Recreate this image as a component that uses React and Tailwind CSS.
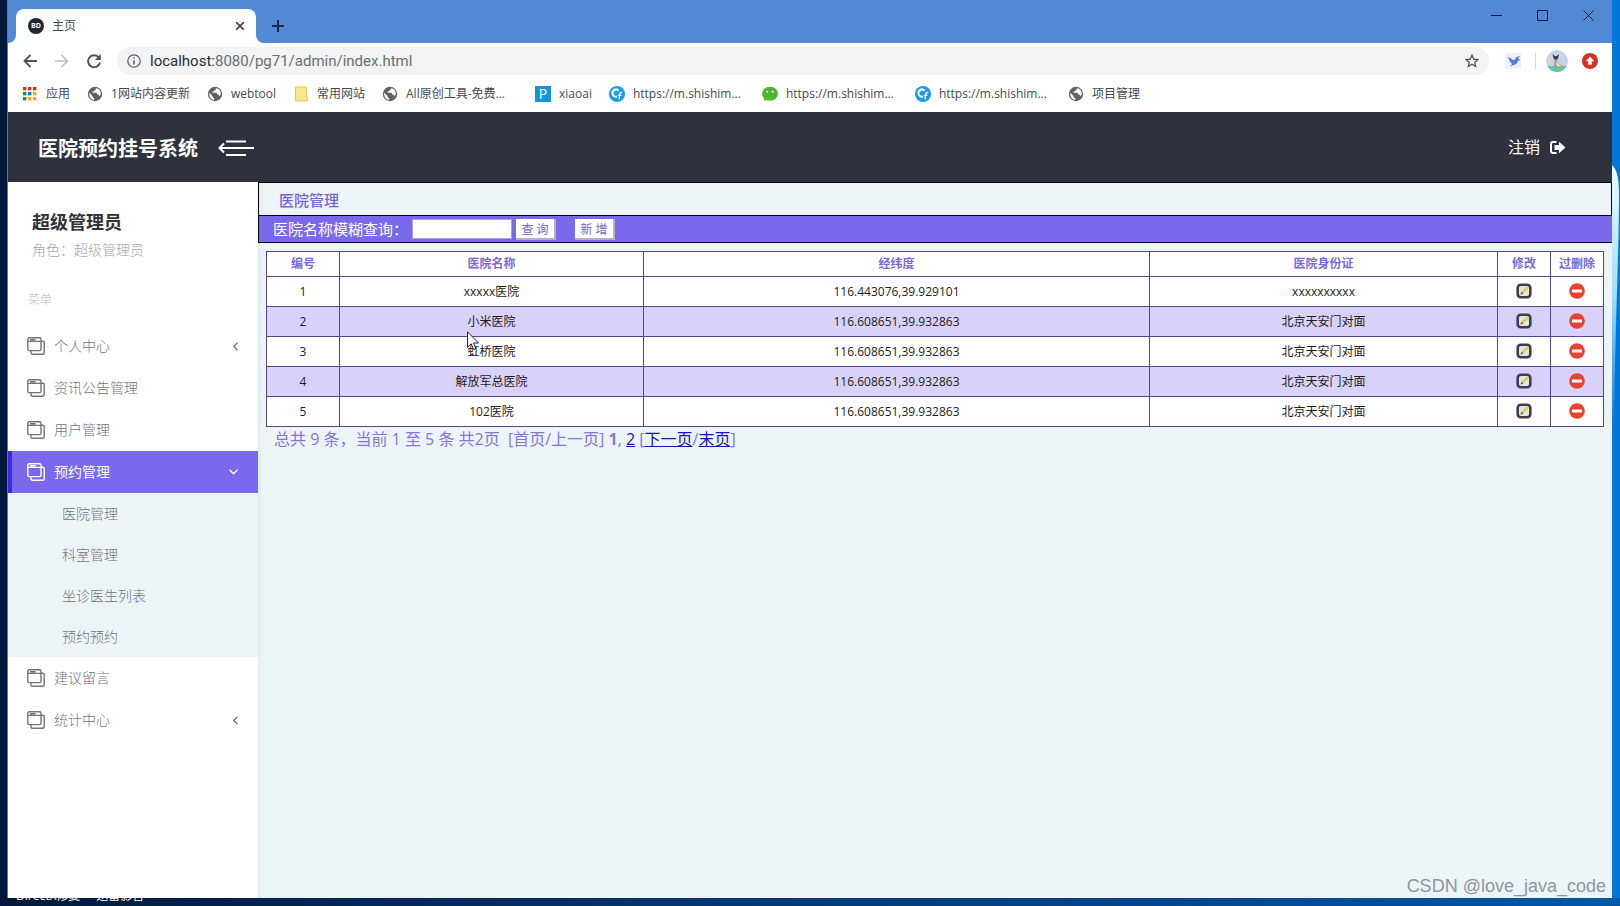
import { useState } from 'react';

const menus = [
    { title: '个人中心', arrow: true },
    { title: '资讯公告管理' },
    { title: '用户管理' },
    { title: '预约管理', arrow: true, children: ['医院管理', '科室管理', '坐诊医生列表', '预约预约'] },
    { title: '建议留言' },
    { title: '统计中心', arrow: true },
];

const hospitals = [
    { name: 'xxxxx医院', position: '116.443076,39.929101', address: 'xxxxxxxxxx' },
    { name: '小米医院', position: '116.608651,39.932863', address: '北京天安门对面' },
    { name: '虹桥医院', position: '116.608651,39.932863', address: '北京天安门对面' },
    { name: '解放军总医院', position: '116.608651,39.932863', address: '北京天安门对面' },
    { name: '102医院', position: '116.608651,39.932863', address: '北京天安门对面' },
];

const bookmarks = [
    { icon: 'apps', label: '应用' },
    { icon: 'globe', label: '1网站内容更新' },
    { icon: 'globe', label: 'webtool' },
    { icon: 'folder', label: '常用网站' },
    { icon: 'globe', label: 'All原创工具-免费...', wide: true },
    { icon: 'p', label: 'xiaoai' },
    { icon: 'c', label: 'https://m.shishim...', wide: true },
    { icon: 'wechat', label: 'https://m.shishim...', wide: true },
    { icon: 'c', label: 'https://m.shishim...', wide: true },
    { icon: 'globe', label: '项目管理' },
];

const BookmarkIcon = ({ type }) => {
    const appColors = ['#d93025', '#d93025', '#d93025', '#1e8e3e', '#1a73e8', '#f9ab00', '#1e8e3e', '#f9ab00', '#f9ab00'];

    if (type === 'apps') {
        return (
            <svg className="size-4 shrink-0" viewBox="0 0 16 16">
                {appColors.map((color, i) => (
                    <rect key={i} x={1 + (i % 3) * 5} y={1 + Math.floor(i / 3) * 5} width="3.4" height="3.4" fill={color} />
                ))}
            </svg>
        );
    }
    if (type === 'folder') {
        return (
            <svg className="size-4 shrink-0" viewBox="0 0 16 16">
                <path d="M2.5 1h11v10l.8 1v3H2.5z" fill="#fce68c" stroke="#e8c64f" strokeWidth="1" />
            </svg>
        );
    }
    if (type === 'p') {
        return <span className="flex size-4 shrink-0 items-center justify-center bg-[#1296db] text-sm text-white">P</span>;
    }
    if (type === 'c') {
        return (
            <svg className="size-4 shrink-0" viewBox="0 0 16 16">
                <circle cx="8" cy="8" r="8" fill="#1b9be6" />
                <path d="M9.6 4.6A3.6 3.6 0 1 0 8 10.6" fill="none" stroke="#fff" strokeWidth="2" />
                <path d="M13.2 6.6c-2-.4-2.6.6-2.7 2.2l-.3 4.4M8.8 9.4h3.6" fill="none" stroke="#fff" strokeWidth="1.3" />
            </svg>
        );
    }
    if (type === 'wechat') {
        return (
            <svg className="size-4 shrink-0" viewBox="0 0 16 16">
                <ellipse cx="8" cy="7.8" rx="8" ry="7" fill="#4cb82e" />
                <path d="M2.5 12 2 15l3.5-1.2z" fill="#4cb82e" />
                <circle cx="5.2" cy="5.8" r="1" fill="#fff" />
                <circle cx="10.6" cy="5.8" r="1" fill="#fff" />
            </svg>
        );
    }
    return (
        <svg className="size-4 shrink-0" viewBox="0 0 16 16">
            <circle cx="8" cy="8" r="7.2" fill="#5f6368" />
            <path d="M2.3 6.8 5.5 10v1l1.7 1.5v1.5C4.3 13.7 2.2 11 2.2 8zM8.8 2.2c.4 1-.2 1.8-1.3 2-.2 1.3-.9 1.2-1.9 1.3v1.3h3.6c1 .2.9 1.8 2 2 .9 0 1.3.7 1.2 1.8 1.5-1.8 1.8-4 .7-5.900-.8-1.400-2.300-2.400-4.300-2.500z" fill="#fff" />
        </svg>
    );
};

const WindowsIcon = () => (
    <svg className="size-[18px] shrink-0" viewBox="0 0 18 18" fill="none" stroke="currentColor" strokeWidth="1.4">
        <rect x=".8" y=".8" width="13.2" height="12.8" rx="1.6" />
        <path d="M.8 4.4H14M3 2.7h5.500M14 4.200h2a1.200 1.200 0 0 1 1.200 1.200V16a1.200 1.200 0 0 1-1.200 1.200H5.200A1.200 1.200 0 0 1 4 16v-2.400" />
    </svg>
);

const EditIcon = () => (
    <svg className="size-4" viewBox="0 0 16 16">
        <rect x="1.7" y="1.7" width="12.6" height="12.6" rx="3" fill="#dfe5e8" stroke="#3c3e4c" strokeWidth="2.6" />
        <path d="m4.500 11.500 1-2.800 5.600-5.500 2 1.900-5.700 5.500z" fill="#e6cd55" />
        <path d="m4.500 11.500 1-2.800 1.900 1.900z" fill="#6b5f49" />
    </svg>
);

const DeleteIcon = () => (
    <svg className="size-4" viewBox="0 0 16 16">
        <circle cx="8" cy="8" r="7.8" fill="#e8432e" />
        <rect x="3" y="6.6" width="10" height="2.8" rx=".5" fill="#fff" />
    </svg>
);

const TitleBar = () => (
    <div className="flex h-[43px] items-end bg-[#5389d4]">
        <svg className="size-2" viewBox="0 0 8 8"><path d="M8 0v8H0a8 8 0 0 0 8-8z" fill="#fff" /></svg>
        <div className="flex h-[34px] w-60 items-center rounded-t-lg bg-white px-3 text-xs text-[#45494d]">
            <span className="mr-2 flex size-4 items-center justify-center rounded-full bg-[#23262e] text-[7px] font-bold text-white">BD</span>
            <span className="flex-1">主页</span>
            <button aria-label="关闭标签页">
                <svg className="size-2" viewBox="0 0 8 8" stroke="#3c4043" strokeWidth="1.600"><path d="m0 0 8 8M8 0 0 8" /></svg>
            </button>
        </div>
        <svg className="size-2" viewBox="0 0 8 8"><path d="M0 0v8h8a8 8 0 0 1-8-8z" fill="#fff" /></svg>
        <button className="mb-[11px] ml-2" aria-label="新标签页">
            <svg className="size-3" viewBox="0 0 12 12" stroke="#1b2b45" strokeWidth="2"><path d="M6 0v12M0 6h12" /></svg>
        </button>
        <div className="ml-auto flex items-center gap-[35px] self-start pt-[10px] pr-[18px]">
            <button aria-label="最小化">
                <svg className="size-[11px]" viewBox="0 0 11 11" stroke="#101c33"><path d="M0 5.500h11" /></svg>
            </button>
            <button aria-label="最大化">
                <svg className="size-[11px]" viewBox="0 0 11 11" fill="none" stroke="#101c33"><path d="M.5.5h10v10H.5z" /></svg>
            </button>
            <button aria-label="关闭">
                <svg className="size-[11px]" viewBox="0 0 11 11" stroke="#101c33"><path d="m.5.5 10 10m0-10-10 10" /></svg>
            </button>
        </div>
    </div>
);

const AddressBar = () => (
    <div className="flex h-9 items-center pl-[15px]">
        <div className="flex items-center gap-[18px] text-[#505357]">
            <button aria-label="后退">
                <svg className="size-[14px]" viewBox="0 0 14 14" fill="none" stroke="currentColor" strokeWidth="1.800"><path d="M14 7H1.500M7.500 1l-6 6 6 6" /></svg>
            </button>
            <button className="text-[#bcbec1]" aria-label="前进">
                <svg className="size-[14px]" viewBox="0 0 14 14" fill="none" stroke="currentColor" strokeWidth="1.600"><path d="M0 7h12.500M6.500 1l6 6-6 6" /></svg>
            </button>
            <button aria-label="刷新">
                <svg className="size-[14px]" viewBox="0 0 14 14" fill="none" stroke="currentColor" strokeWidth="1.900">
                    <path d="M12 3.800A6 6 0 1 0 13 8.500" />
                    <path d="M13.800 0v6H7.800z" fill="currentColor" stroke="none" />
                </svg>
            </button>
        </div>
        <div className="ml-4 flex h-7 flex-1 items-center rounded-full bg-[#f1f3f4] pr-[10px] pl-[10px]">
            <svg className="mr-[9px] size-[14px]" viewBox="0 0 14 14" fill="none" stroke="#5f6368" strokeWidth="1.300">
                <circle cx="7" cy="7" r="6.200" />
                <path d="M7 6.200v4.300M7 3.400v1.400" strokeWidth="1.600" />
            </svg>
            <span className="flex-1 font-['Roboto',sans-serif] text-[15px] text-[#6b6f73]"><span className="text-[#2b2e31]">localhost:</span>8080/pg71/admin/index.html</span>
            <button aria-label="收藏">
                <svg className="size-[14px]" viewBox="0 0 14 14" fill="none" stroke="#505357" strokeWidth="1.300"><path d="m7 1.200 1.700 3.900 4.300.4-3.200 2.800.9 4.200L7 10.300l-3.700 2.200.9-4.200L1 5.500l4.300-.4z" /></svg>
            </button>
        </div>
        <div className="ml-4 flex items-center pr-[14px]">
            <svg className="size-4 bg-[#eef0fc]" viewBox="0 0 16 16">
                <path d="M3 3.500 8 7l1.500.3C9.800 5.200 11.500 3.500 15 3c-1.200 1-1.300 1.800-1.800 2.800l2.300 1.200-2.500.7c-.6 2.300-1.700 3.600-4.300 4.300L5 13.500 7.200 11C5.200 9.500 3.800 7 3 3.500z" fill="#5a78ea" />
            </svg>
            <span className="mr-[10px] ml-[14px] h-4 w-px bg-[#d5d8dc]" />
            <svg className="size-[22px] rounded-full" viewBox="0 0 22 22">
                <circle cx="11" cy="11" r="11" fill="#c9d3e8" />
                <path d="M1 16h20a11 11 0 0 1-20 0z" fill="#5cc5b4" />
                <path d="m6.500 4 2.300 2h2L13 4l-.8 4.200-2.300 2.300L7.500 8.200z" fill="#3e413f" />
                <path d="m8.500 9.500 2.500.3.5 3 6 3.500v1H8z" fill="#a79c86" />
                <path d="m9.500 12 1.500 4 5 .6-4-3z" fill="#eee6d2" />
            </svg>
            <svg className="ml-[14px] size-4" viewBox="0 0 16 16">
                <circle cx="8" cy="8" r="8" fill="#d93025" />
                <path d="m8 3.500 4.300 4.700H9.800v3.600H6.200V8.200H3.700z" fill="#fff" />
            </svg>
        </div>
    </div>
);

const Bookmarks = () => (
    <nav className="flex h-[33px] items-center gap-[17px] pb-1 pl-[14px] text-xs text-[#45494d]">
        {bookmarks.map((item, i) => (
            <a key={i} href="#" className="flex items-center gap-2 whitespace-nowrap">
                <BookmarkIcon type={item.icon} />
                <span className={item.wide ? 'w-28' : ''}>{item.label}</span>
            </a>
        ))}
    </nav>
);

const Sidebar = () => {
    const [active, setActive] = useState('预约管理');

    return (
        <aside className="w-[250px] shrink-0 bg-white text-sm font-light text-[#6f757c]">
            <div className="px-6 pt-[26px]">
                <h2 className="text-lg font-bold text-[#2f3237]">超级管理员</h2>
                <p className="mt-1 text-[#a3a7ab]">角色：超级管理员</p>
            </div>
            <p className="mt-8 mb-[17px] px-5 text-xs text-[#b9bcbf]">菜单</p>
            <ul>
                {menus.map((menu) => {
                    const open = menu.title === active;
                    return (
                        <li key={menu.title}>
                            <button
                                onClick={() => setActive(menu.title)}
                                className={`flex h-[42px] w-full items-center gap-[9px] border-l-4 pr-5 pl-[15px] text-left ${open ? 'border-[#3d2ae0] bg-[#7a69ec] font-normal text-white' : 'border-transparent'}`}
                            >
                                <WindowsIcon />
                                <span className="flex-1">{menu.title}</span>
                                {menu.arrow && (
                                    <svg className={open ? 'h-[6px] w-[9px]' : 'h-[9px] w-[5px]'} viewBox={open ? '0 0 9 6' : '0 0 5 9'} fill="none" stroke="currentColor" strokeWidth="1.400">
                                        <path d={open ? 'm.5.8 4 4 4-4' : 'm4.500.8-3.800 3.700 3.800 3.700'} />
                                    </svg>
                                )}
                            </button>
                            {open && menu.children && (
                                <ul className="bg-[#edf4f8]">
                                    {menu.children.map((child) => (
                                        <li key={child}>
                                            <a href="#" className="flex h-[41px] items-center pl-[54px]">{child}</a>
                                        </li>
                                    ))}
                                </ul>
                            )}
                        </li>
                    );
                })}
            </ul>
        </aside>
    );
};

const HospitalTable = () => (
    <table className="w-full table-fixed border-collapse bg-white text-center text-xs text-[#1c1c1c] [&_td]:border [&_td]:border-[#51468f] [&_th]:border [&_th]:border-[#51468f]">
        <colgroup>
            <col className="w-[73px]" />
            <col className="w-[304px]" />
            <col />
            <col className="w-[348px]" />
            <col className="w-[53px]" />
            <col className="w-[53px]" />
        </colgroup>
        <thead>
            <tr className="h-[25px] text-[#7a69d8]">
                <th>编号</th>
                <th>医院名称</th>
                <th>经纬度</th>
                <th>医院身份证</th>
                <th>修改</th>
                <th>过删除</th>
            </tr>
        </thead>
        <tbody>
            {hospitals.map((hospital, i) => (
                <tr key={i} className="h-[30px] even:bg-[#d8d2fa]">
                    <td>{i + 1}</td>
                    <td>{hospital.name}</td>
                    <td>{hospital.position}</td>
                    <td>{hospital.address}</td>
                    <td className="pb-[2px]"><button className="mx-auto block" aria-label="修改"><EditIcon /></button></td>
                    <td className="pb-[2px]"><button className="mx-auto block" aria-label="删除"><DeleteIcon /></button></td>
                </tr>
            ))}
        </tbody>
    </table>
);

const HospitalPage = () => (
    <main className="min-w-0 flex-1 bg-[#edf4f8] bg-linear-to-r from-[#e3e9ee] to-[#edf4f8] to-[5px]">
        <div className="border border-black">
            <h1 className="flex h-8 items-center pt-[3px] pl-5 text-[15px] font-medium text-[#7566d6]">医院管理</h1>
        </div>
        <form className="flex h-[27px] items-center border-b border-l border-black bg-[#7a69ec] pl-[14px]" onSubmit={(e) => e.preventDefault()}>
            <label htmlFor="hospitalName" className="text-[15px] text-white">医院名称模糊查询：</label>
            <input id="hospitalName" type="text" className="ml-1 h-5 w-[100px] border border-[#a9a2d4] bg-white px-1 text-xs" />
            <button className="ml-1 h-[21px] w-10 border-r-2 border-b-2 border-[#b5b0c9] bg-white pt-[3px] text-xs leading-4 text-[#7566c8]">查 询</button>
            <button type="button" className="ml-[19px] h-[21px] w-10 border-r-2 border-b-2 border-[#b5b0c9] bg-white pt-[3px] text-xs leading-4 text-[#7566c8]">新 增</button>
        </form>
        <div className="px-2 pt-2">
            <HospitalTable />
            <p className="pl-2 text-base whitespace-pre text-[#8577d8]">
                总共 9 条，当前 1 至 5 条 共2页  [首页/上一页] <b>1</b>, <a href="#" className="text-[#1c14b4] underline">2</a> [<a href="#" className="text-[#1c14b4] underline">下一页</a>/<a href="#" className="text-[#1c14b4] underline">末页</a>]
            </p>
        </div>
    </main>
);

const App = () => (
    <div className="relative flex min-h-screen bg-linear-to-r from-[#03183a] via-[#053a78] to-[#0058a8] pb-2 font-['Open_Sans','Noto_Sans_CJK_SC',sans-serif]">
        {/* desktop shortcut captions, mostly behind the browser window */}
        <div className="absolute bottom-1 left-4 flex gap-4 text-xs leading-3 text-white">
            <span>DirectX修复</span>
            <span>迅雷影音</span>
        </div>

        <div className="w-2 border-r border-[#4d79b8]" />
        <div className="relative flex flex-1 flex-col bg-white">
            <TitleBar />
            <AddressBar />
            <Bookmarks />
            <header className="flex h-[70px] items-center bg-[#2e323e] pr-[46px] pl-[30px] text-white">
                <span className="pt-[3px] text-xl font-bold">医院预约挂号系统</span>
                <button className="ml-5 pt-[2px]" aria-label="收起菜单">
                    <svg className="h-4 w-9" viewBox="0 0 36 16" fill="none" stroke="#fff" strokeWidth="2">
                        <path d="M8 1.500h20M1.500 8H36M8 15h20M6 3.500 1.500 8 6 12.500" />
                    </svg>
                </button>
                <a href="#" className="ml-auto flex items-center gap-[10px]">
                    注销
                    <svg className="h-[13px] w-4" viewBox="0 0 16 13">
                        <path d="M6.500 1H3a2 2 0 0 0-2 2v7a2 2 0 0 0 2 2h3.500" fill="none" stroke="#fff" strokeWidth="2" />
                        <path d="M9 .8 15.500 6.500 9 12.200V9H4.500V4H9z" fill="#fff" />
                    </svg>
                </a>
            </header>
            <div className="flex flex-1">
                <Sidebar />
                <HospitalPage />
            </div>
        </div>
        <svg className="w-2 shrink-0 self-stretch" viewBox="0 0 8 898" preserveAspectRatio="none">
            <defs>
                <linearGradient id="glow" x2="0" y2="1">
                    <stop offset="0" stopColor="#f2fdff" />
                    <stop offset=".5" stopColor="#9fdcfa" />
                    <stop offset="1" stopColor="#0a78d0" />
                </linearGradient>
            </defs>
            <path d="M0 0h8v898H0z" fill="#0078d7" />
            <path d="M0 165c5 5 7 12 7 30 0 60-4 130-5 235H0z" fill="url(#glow)" />
        </svg>

        <svg className="absolute top-[331px] left-[467px] h-5 w-3" viewBox="0 0 12 20">
            <path d="M.5.8v15.500l3.700-3.500 2.400 5.700 2.300-1-2.400-5.500h5z" fill="#fff" stroke="#222" />
        </svg>
        <span className="absolute right-[14px] bottom-[6px] font-['Liberation_Sans',sans-serif] text-lg text-[#90969b]">CSDN @love_java_code</span>
    </div>
);

export default App;
